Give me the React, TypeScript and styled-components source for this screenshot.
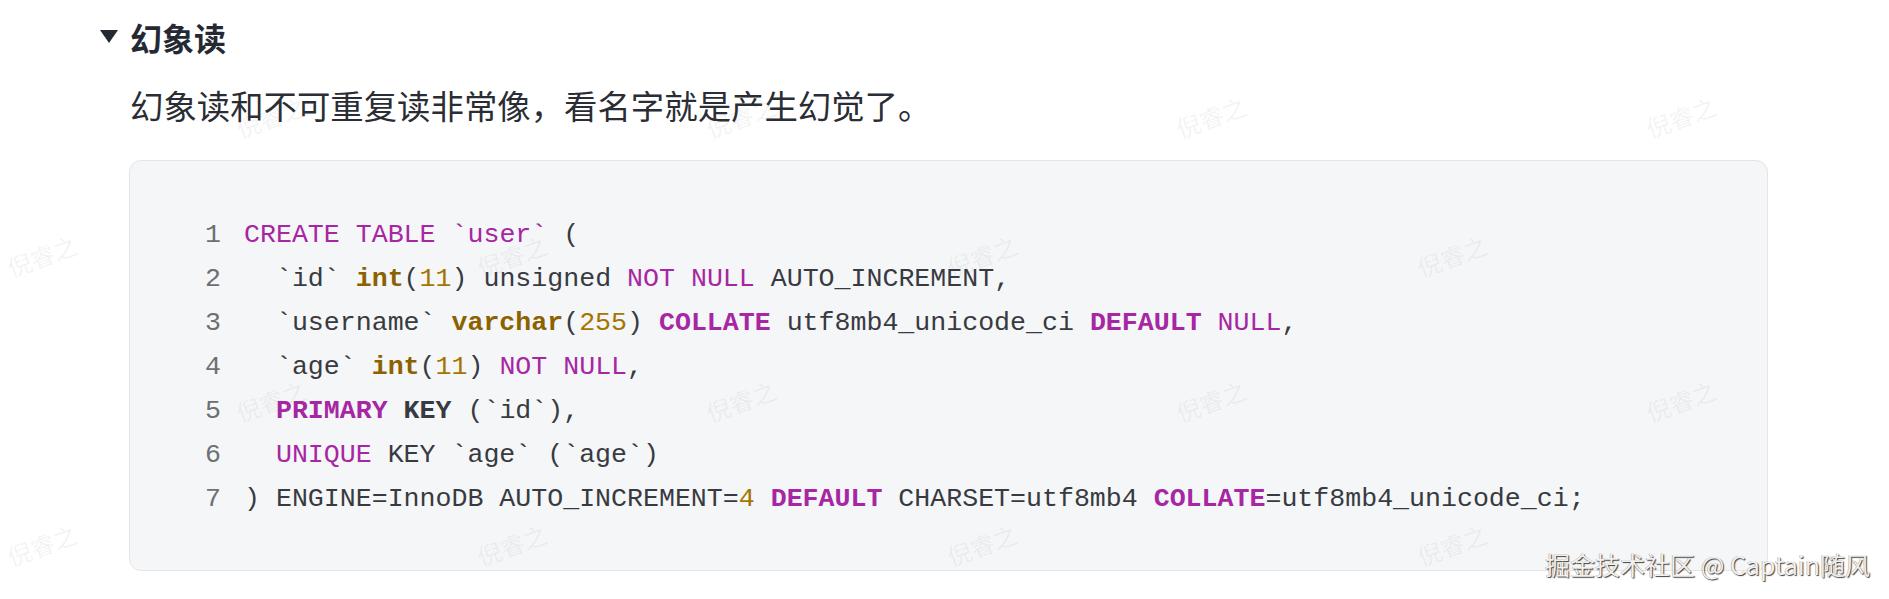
import React from "react";
import styled, { createGlobalStyle } from "styled-components";

const GlobalStyle = createGlobalStyle`
  html, body {
    margin: 0;
    padding: 0;
    background: #ffffff;
  }
  body {
    font-family: "Noto Sans CJK SC", "Noto Sans", sans-serif;
  }
`;

const Page = styled.div`
  position: relative;
  width: 1889px;
  height: 599px;
  overflow: hidden;
  box-sizing: border-box;
  padding: 15px 121px 0 100px;
  display: flex;
  flex-direction: column;
`;

const Heading = styled.h3`
  margin: 0;
  display: flex;
  align-items: center;
  gap: 12px;
  height: 44px;
  font-family: "Noto Sans CJK SC", sans-serif;
  font-size: 32px;
  font-weight: 700;
  color: #252933;
  line-height: 44px;
`;

const Caret = styled.svg`
  width: 18px;
  height: 13px;
  flex: none;
  margin-top: -1px;
`;

const Paragraph = styled.p`
  margin: 24px 0 0 30px;
  font-family: "Noto Sans CJK SC", sans-serif;
  font-size: 33.4px;
  line-height: 44px;
  color: #2a2d33;
`;

const CodeBox = styled.pre`
  margin: 33px 0 0 29px;
  padding: 52px 0 49px 0;
  background: #f5f6f7;
  border: 1.5px solid #e3e5e8;
  border-radius: 12px;
  font-family: "Liberation Mono", "DejaVu Sans Mono", monospace;
  font-size: 26.6px;
  line-height: 44px;
  color: #383a42;
  display: flex;
  flex-direction: column;
`;

const Line = styled.div`
  display: flex;
  white-space: pre;
  height: 44px;
`;

const LineNo = styled.span`
  width: 91px;
  margin-right: 23px;
  text-align: right;
  color: #6e6f73;
  flex: none;
`;

type Kind = "plain" | "kw" | "kwb" | "type" | "num" | "bold";

const Tok = styled.span<{ $k: Kind }>`
  color: ${(p) =>
    p.$k === "kw" || p.$k === "kwb"
      ? "#a626a4"
      : p.$k === "type"
      ? "#8c6100"
      : p.$k === "num"
      ? "#a57500"
      : "#383a42"};
  font-weight: ${(p) =>
    p.$k === "kwb" || p.$k === "type" || p.$k === "bold" ? 700 : 400};
`;

const WatermarkLayer = styled.div`
  position: absolute;
  inset: 0;
  pointer-events: none;
`;

const Mark = styled.span`
  position: absolute;
  font-family: "Noto Sans CJK SC", sans-serif;
  font-size: 24px;
  line-height: 30px;
  color: rgba(120, 120, 120, 0.09);
  transform: rotate(-20deg);
  white-space: nowrap;
`;

const Credit = styled.div`
  position: absolute;
  right: 19px;
  bottom: 20px;
  font-family: "Noto Sans CJK SC", sans-serif;
  font-size: 25px;
  line-height: 30px;
  color: #f0f0f0;
  text-shadow: 1px 1px 1px rgba(0, 0, 0, 0.75), -0.5px -0.5px 0.5px rgba(0, 0, 0, 0.35);
  white-space: nowrap;
`;

const lines: [Kind, string][][] = [
  [["kw", "CREATE"], ["plain", " "], ["kw", "TABLE"], ["plain", " "], ["kw", "`user`"], ["plain", " ("]],
  [
    ["plain", "  `id` "],
    ["type", "int"],
    ["plain", "("],
    ["num", "11"],
    ["plain", ") unsigned "],
    ["kw", "NOT"],
    ["plain", " "],
    ["kw", "NULL"],
    ["plain", " AUTO_INCREMENT,"],
  ],
  [
    ["plain", "  `username` "],
    ["type", "varchar"],
    ["plain", "("],
    ["num", "255"],
    ["plain", ") "],
    ["kwb", "COLLATE"],
    ["plain", " utf8mb4_unicode_ci "],
    ["kwb", "DEFAULT"],
    ["plain", " "],
    ["kw", "NULL"],
    ["plain", ","],
  ],
  [
    ["plain", "  `age` "],
    ["type", "int"],
    ["plain", "("],
    ["num", "11"],
    ["plain", ") "],
    ["kw", "NOT"],
    ["plain", " "],
    ["kw", "NULL"],
    ["plain", ","],
  ],
  [["plain", "  "], ["kwb", "PRIMARY"], ["plain", " "], ["bold", "KEY"], ["plain", " (`id`),"]],
  [["plain", "  "], ["kw", "UNIQUE"], ["plain", " KEY `age` (`age`)"]],
  [
    ["plain", ") ENGINE=InnoDB AUTO_INCREMENT="],
    ["num", "4"],
    ["plain", " "],
    ["kwb", "DEFAULT"],
    ["plain", " CHARSET=utf8mb4 "],
    ["kwb", "COLLATE"],
    ["plain", "=utf8mb4_unicode_ci;"],
  ],
];

const rows = [102, 241, 386, 530];
const marks: { x: number; y: number }[] = [];
rows.forEach((y, ri) => {
  const offset = ri % 2 === 0 ? 235 : 6;
  for (let x = offset; x < 1800; x += 470) {
    marks.push({ x, y });
  }
});

export default function App() {
  return (
    <>
      <GlobalStyle />
      <Page>
        <Heading>
          <Caret viewBox="0 0 18 13">
            <polygon points="0,0 18,0 9,13" fill="#252933" />
          </Caret>
          幻象读
        </Heading>
        <Paragraph>幻象读和不可重复读非常像，看名字就是产生幻觉了。</Paragraph>
        <CodeBox>
          {lines.map((toks, i) => (
            <Line key={i}>
              <LineNo>{i + 1}</LineNo>
              <span>
                {toks.map(([k, t], j) => (
                  <Tok key={j} $k={k}>
                    {t}
                  </Tok>
                ))}
              </span>
            </Line>
          ))}
        </CodeBox>
        <WatermarkLayer>
          {marks.map((m, i) => (
            <Mark key={i} style={{ left: m.x, top: m.y }}>
              倪睿之
            </Mark>
          ))}
        </WatermarkLayer>
        <Credit>掘金技术社区 @ Captain随风</Credit>
      </Page>
    </>
  );
}
